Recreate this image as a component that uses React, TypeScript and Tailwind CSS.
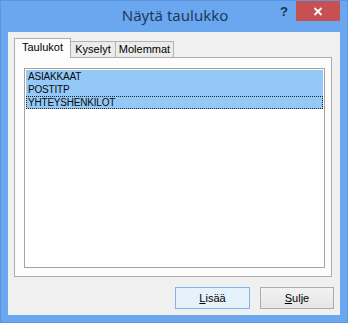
const tables = ["ASIAKKAAT", "POSTITP", "YHTEYSHENKILOT"];

function CloseGlyph() {
  return (
    <svg width="10" height="9" viewBox="0 0 10 9">
      <path d="M1.5 1 L8.5 8 M8.5 1 L1.5 8" stroke="#ffffff" strokeWidth="1.8" />
    </svg>
  );
}

export default function App() {
  return (
    <div className="w-[348px] h-[323px] bg-[#6ba7ee] border border-[#5b95dd] flex flex-col font-['Liberation_Sans',Arial,sans-serif] text-black select-none">
      {/* title bar */}
      <div className="grid grid-cols-[1fr_auto_1fr] h-[31px]">
        <div />
        <div className="pt-[4px] pl-[2px] leading-[20px] text-[15px] text-[#1c3a5e] font-['Noto_Sans',sans-serif]">
          Näytä taulukko
        </div>
        <div className="flex justify-end items-start pr-[7px]">
          <div className="w-[26px] h-[20px] flex items-center justify-center text-[13px] font-bold text-[#1a2f4f] leading-none pl-[2px]">
            ?
          </div>
          <div className="w-[44px] h-[20px] bg-[#c75050] flex items-center justify-center">
            <CloseGlyph />
          </div>
        </div>
      </div>

      {/* client area */}
      <div className="flex-1 mx-[7px] mb-[7px] bg-[#f0f0f0] flex flex-col">
        <div className="ml-[6px] mt-[6px] w-[318px] flex flex-col">
          <div className="flex items-end h-[19px] text-[11px]">
            <div className="relative z-10 w-[57px] h-[20px] -mb-px border border-b-0 border-[#adadad] bg-[#fcfcfc] pl-[7px] pt-[2px] leading-[13px]">
              Taulukot
            </div>
            <div className="-ml-px w-[46px] h-[16px] border border-b-0 border-[#b4b4b4] bg-[#ebebeb] text-center leading-[14px]">
              Kyselyt
            </div>
            <div className="-ml-px w-[59px] h-[16px] border border-b-0 border-[#b4b4b4] bg-[#ebebeb] text-center leading-[14px]">
              Molemmat
            </div>
          </div>
          <div className="w-[318px] h-[220px] border border-[#adadad] bg-[#fcfcfc]">
            <div className="ml-[9px] mt-[10px] w-[301px] h-[200px] border border-[#a3a3a3] bg-white px-px pt-px">
              {tables.map((t, i) => (
                <div
                  key={t}
                  className={
                    i === tables.length - 1
                      ? "h-[13px] leading-[13px] pl-[2px] bg-[#93c8f7] text-[10px] tracking-[-0.2px] text-[#0a0a0a] outline-1 outline-dotted outline-[#202020] -outline-offset-1"
                      : "h-[13px] leading-[13px] pl-[2px] bg-[#93c8f7] text-[10px] tracking-[-0.2px] text-[#0a0a0a]"
                  }
                >
                  {t}
                </div>
              ))}
            </div>
          </div>
        </div>

        <div className="flex gap-[10px] ml-[167px] mt-[10px] text-[11px]">
          <button className="w-[75px] h-[22px] border border-[#7eb4ea] bg-[#e5f1fb] leading-[20px] text-center">
            <span className="underline">L</span>isää
          </button>
          <button className="w-[74px] h-[22px] border border-[#acacac] bg-gradient-to-b from-[#f2f2f2] to-[#e5e5e5] leading-[20px] text-center">
            <span className="underline">S</span>ulje
          </button>
        </div>
      </div>
    </div>
  );
}
